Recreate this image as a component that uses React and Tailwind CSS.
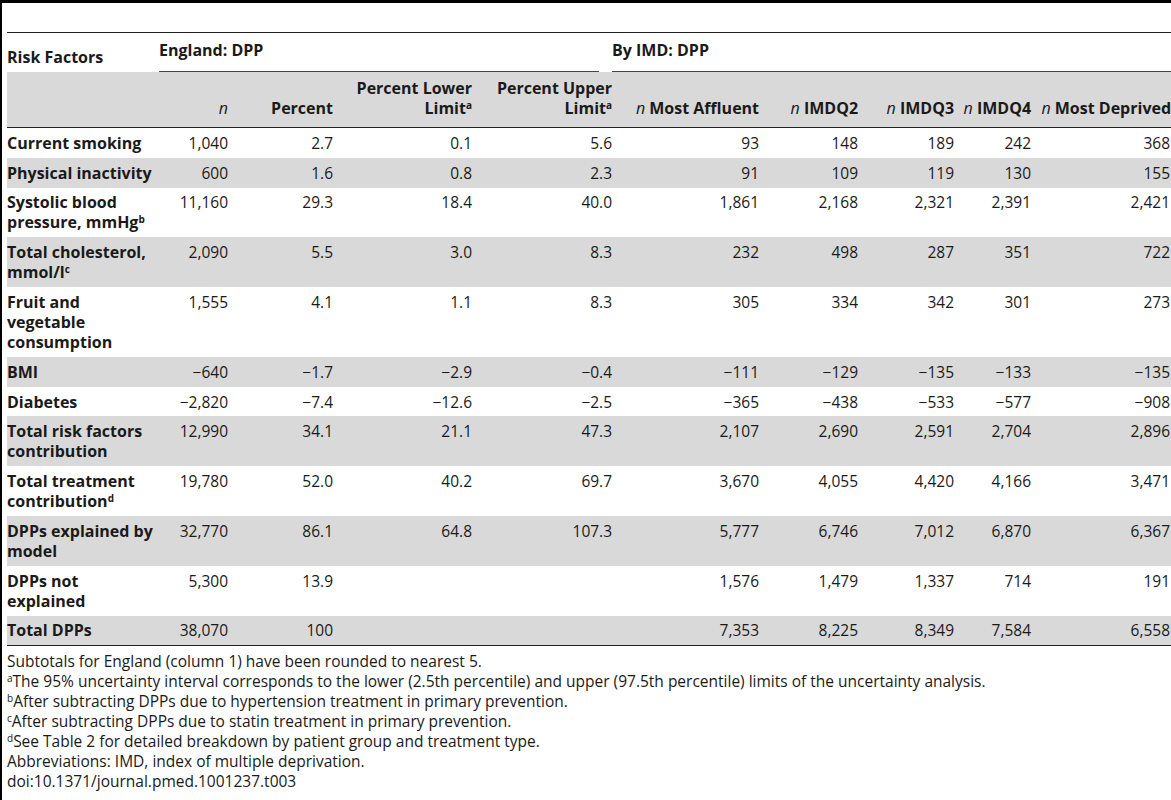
const COLS = [152, 69, 105, 139, 140, 147, 99, 96, 77, 140];

function Sup({ children }) {
  return <sup className="text-[10px]">{children}</sup>;
}

const ROWS = [
  { label: ['Current smoking'], v: ['1,040', '2.7', '0.1', '5.6', '93', '148', '189', '242', '368'] },
  { label: ['Physical inactivity'], v: ['600', '1.6', '0.8', '2.3', '91', '109', '119', '130', '155'] },
  { label: ['Systolic blood', <>pressure, mmHg<Sup>b</Sup></>], v: ['11,160', '29.3', '18.4', '40.0', '1,861', '2,168', '2,321', '2,391', '2,421'] },
  { label: ['Total cholesterol,', <>mmol/l<Sup>c</Sup></>], v: ['2,090', '5.5', '3.0', '8.3', '232', '498', '287', '351', '722'] },
  { label: ['Fruit and', 'vegetable', 'consumption'], v: ['1,555', '4.1', '1.1', '8.3', '305', '334', '342', '301', '273'] },
  { label: ['BMI'], v: ['\u2212640', '\u22121.7', '\u22122.9', '\u22120.4', '\u2212111', '\u2212129', '\u2212135', '\u2212133', '\u2212135'] },
  { label: ['Diabetes'], v: ['\u22122,820', '\u22127.4', '\u221212.6', '\u22122.5', '\u2212365', '\u2212438', '\u2212533', '\u2212577', '\u2212908'] },
  { label: ['Total risk factors', 'contribution'], v: ['12,990', '34.1', '21.1', '47.3', '2,107', '2,690', '2,591', '2,704', '2,896'] },
  { label: ['Total treatment', <>contribution<Sup>d</Sup></>], v: ['19,780', '52.0', '40.2', '69.7', '3,670', '4,055', '4,420', '4,166', '3,471'] },
  { label: ['DPPs explained by', 'model'], v: ['32,770', '86.1', '64.8', '107.3', '5,777', '6,746', '7,012', '6,870', '6,367'] },
  { label: ['DPPs not', 'explained'], v: ['5,300', '13.9', '', '', '1,576', '1,479', '1,337', '714', '191'] },
  { label: ['Total DPPs'], v: ['38,070', '100', '', '', '7,353', '8,225', '8,349', '7,584', '6,558'] },
];

const NOTES = [
  ['', 'Subtotals for England (column 1) have been rounded to nearest 5.'],
  ['a', 'The 95% uncertainty interval corresponds to the lower (2.5th percentile) and upper (97.5th percentile) limits of the uncertainty analysis.'],
  ['b', 'After subtracting DPPs due to hypertension treatment in primary prevention.'],
  ['c', 'After subtracting DPPs due to statin treatment in primary prevention.'],
  ['d', 'See Table 2 for detailed breakdown by patient group and treatment type.'],
  ['', 'Abbreviations: IMD, index of multiple deprivation.'],
  ['', 'doi:10.1371/journal.pmed.1001237.t003'],
];

function Head({ children }) {
  return <th className="px-0 pt-[6px] pb-[9px] text-right align-bottom text-[16px] font-bold whitespace-nowrap">{children}</th>;
}

export default function App() {
  return (
    <div
      className="min-h-[800px] w-[1171px] border-l-2 border-t-[3px] border-black bg-white pl-[5px] text-[15.5px] leading-[20px] text-[#1a1a1a]"
      style={{ fontFamily: '"Open Sans", "Liberation Sans", sans-serif' }}
    >
      <div className="h-[29px]" />
      <table className="w-[1164px] table-fixed border-collapse">
        <colgroup>
          {COLS.map((w, i) => (
            <col key={i} style={{ width: w }} />
          ))}
        </colgroup>
        <thead>
          <tr className="border-t border-[#222]">
            <th className="pt-[14px] text-left align-top text-[16px] font-bold">Risk Factors</th>
            <th colSpan={4} className="pt-[7px] text-left align-top text-[16px] font-bold">
              <div>England: DPP</div>
              <div className="mt-[11px] mr-[13px] border-b border-[#444]" />
            </th>
            <th colSpan={5} className="pt-[7px] text-left align-top text-[16px] font-bold">
              <div>By IMD: DPP</div>
              <div className="mt-[11px] border-b border-[#444]" />
            </th>
          </tr>
          <tr className="border-b border-[#222] bg-[#d9d9d9]">
            <th />
            <Head><i className="font-normal">n</i></Head>
            <Head>Percent</Head>
            <Head>Percent Lower<br />Limit<Sup>a</Sup></Head>
            <Head>Percent Upper<br />Limit<Sup>a</Sup></Head>
            <Head><i className="font-normal">n</i> Most Affluent</Head>
            <Head><i className="font-normal">n</i> IMDQ2</Head>
            <Head><i className="font-normal">n</i> IMDQ3</Head>
            <Head><i className="font-normal">n</i> IMDQ4</Head>
            <Head><i className="font-normal">n</i> Most Deprived</Head>
          </tr>
        </thead>
        <tbody>
          {ROWS.map((r, i) => (
            <tr key={i} className={i % 2 === 1 ? 'bg-[#d9d9d9]' : 'bg-white'}>
              <td className="py-[4.9px] align-top text-[16px] font-bold whitespace-nowrap">
                {r.label.map((l, j) => (
                  <div key={j}>{l}</div>
                ))}
              </td>
              {r.v.map((v, j) => (
                <td key={j} className={'py-[4.9px] text-right align-top whitespace-nowrap' + (j === 8 ? ' pr-[1px]' : '')}>
                  {v}
                </td>
              ))}
            </tr>
          ))}
          <tr className="border-t border-[#222]" />
        </tbody>
      </table>
      <div className="pt-[5px]">
        {NOTES.map(([s, t], i) => (
          <div key={i}>
            {s && <Sup>{s}</Sup>}
            {t}
          </div>
        ))}
      </div>
    </div>
  );
}
